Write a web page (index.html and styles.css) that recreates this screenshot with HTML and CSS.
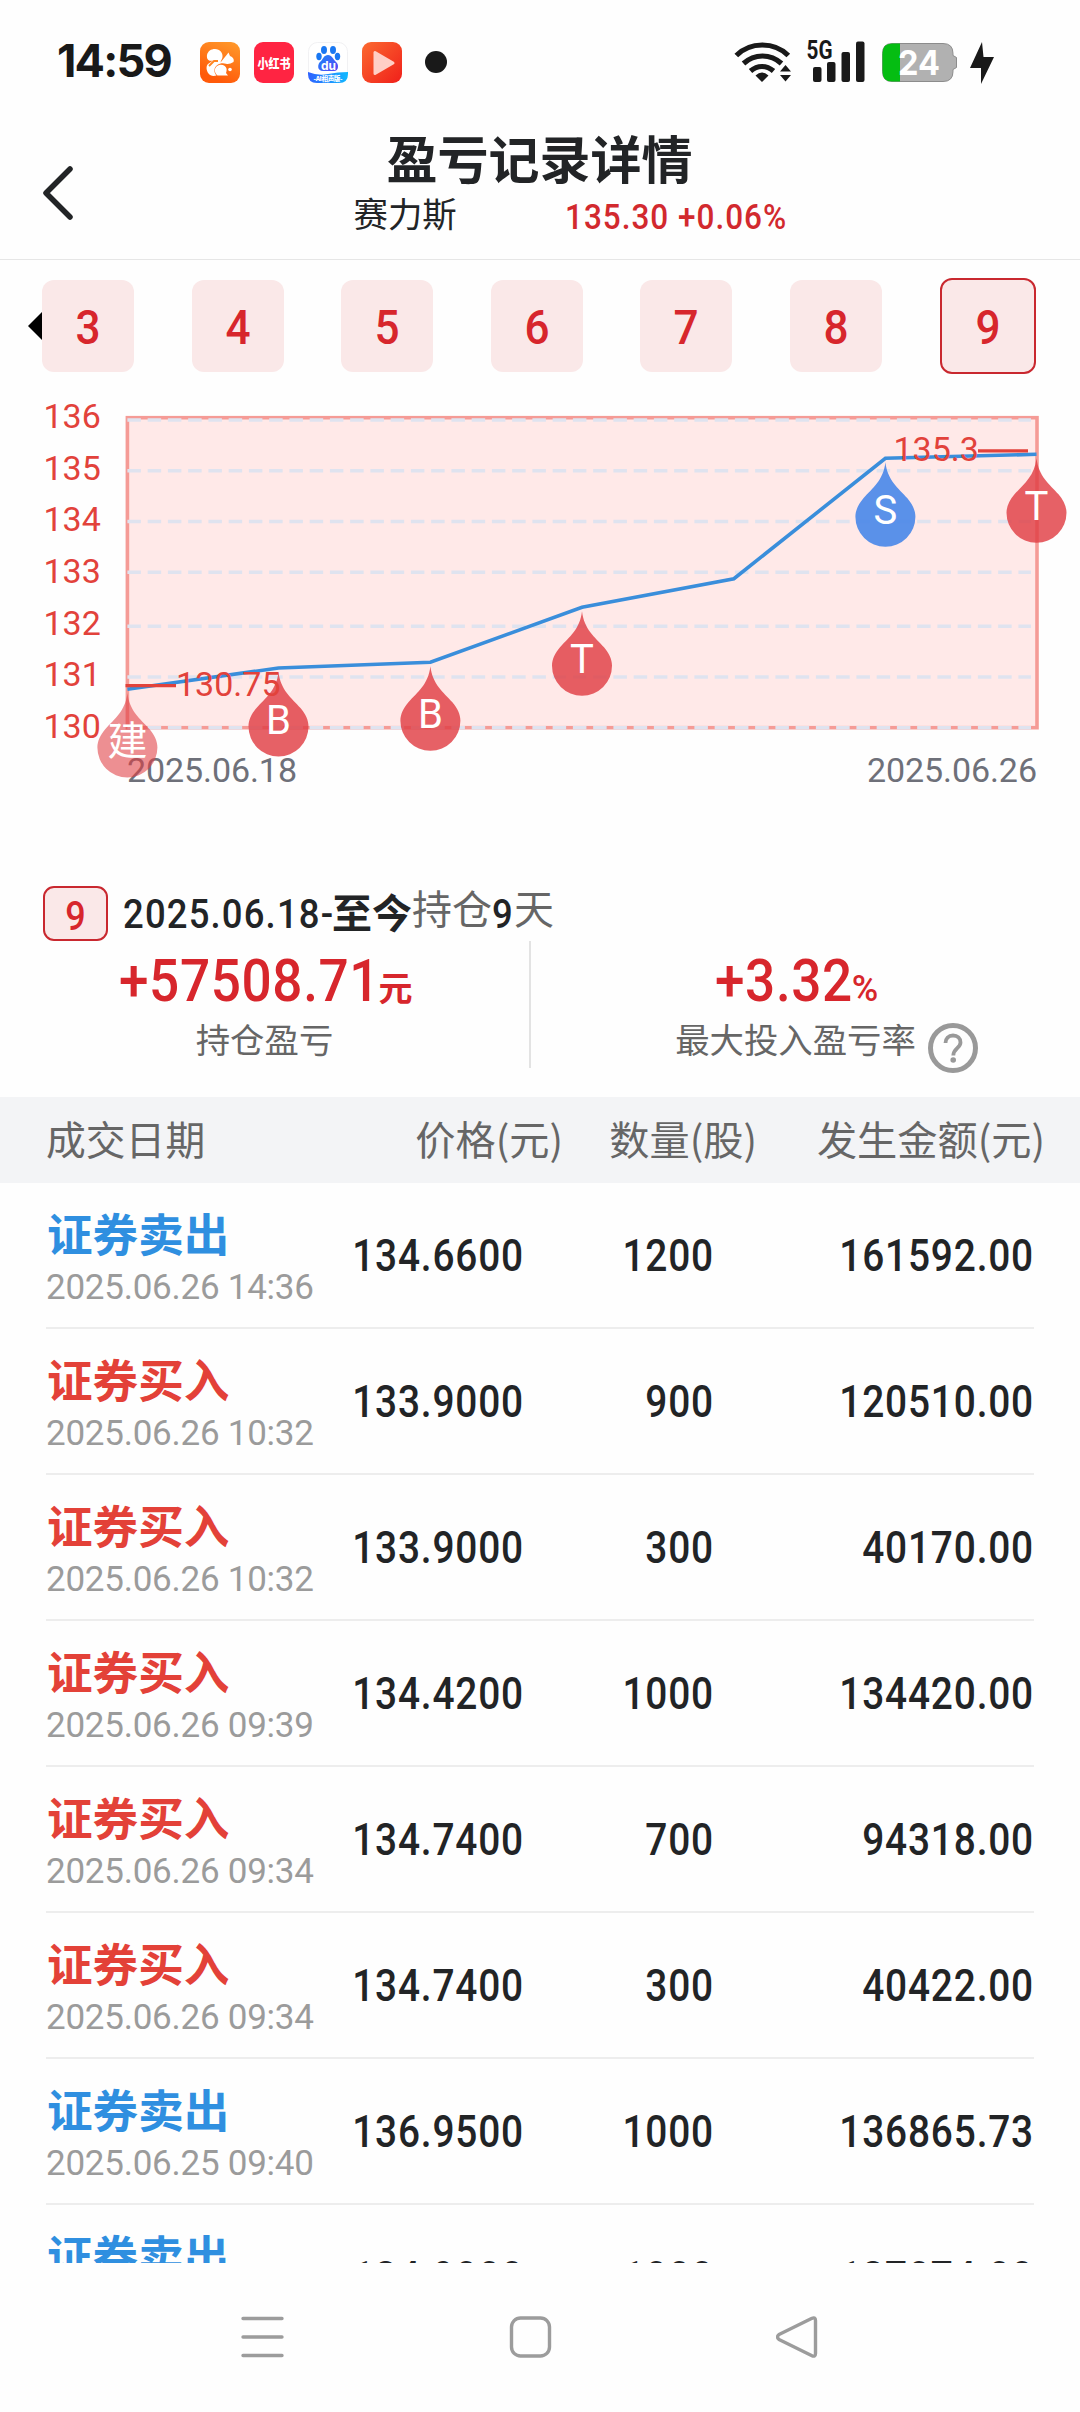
FILE: index.html
```html
<!DOCTYPE html>
<html lang="zh-CN">
<head>
<meta charset="utf-8">
<title>盈亏记录详情</title>
<link rel="stylesheet" href="styles.css">
</head>
<body>
<div class="screen">
  <div class="status">
    <span class="clock">14:59</span>
    <div class="apps">
      <svg class="app" viewBox="0 0 40 41">
        <defs><linearGradient id="uc" x1="1" y1="0" x2=".6" y2="1"><stop offset="0" stop-color="#ff9b2b"/><stop offset="1" stop-color="#ff5a0a"/></linearGradient></defs>
        <rect width="40" height="41" rx="9" fill="url(#uc)"/>
        <path fill="#fff" d="M8.500 31.500C6 28 6 24 8 22l5-3.500C8 20 6.500 16.500 7 13c1-4 4-6 8-6 5 0 8 4 7.500 8-.3 2-1.500 3.500-2 5.500l6.500-8 1.500-2 1.500 3.500c3 1 4.500 3.500 3.500 6l-3 1.500c-2 .5-3 .5-4.500.2-5-1.700-11 1-11.500 6-.2 2.500.5 4 2 5.800-3 .8-6.500.5-8-2z"/>
        <path fill="#fff" d="M17.500 33.500c-3-2.500-3.500-6.500-1-9 3-3 9-2 10 2 .3 1.500 0 3-.5 4.500l2 2.500z"/>
        <circle cx="30" cy="27.500" r="1.800" fill="#fff"/>
        <path d="M9 24l5-5 4 0" stroke="#ff8420" stroke-width="1.800" fill="none"/>
      </svg>
      <svg class="app" viewBox="0 0 40 41">
        <rect width="40" height="41" rx="9" fill="#ff2442"/>
        <text class="tiny red-book" x="20" y="25.500" text-anchor="middle" textLength="33" lengthAdjust="spacingAndGlyphs">小红书</text>
      </svg>
      <svg class="app" viewBox="0 0 40 41">
        <defs>
          <linearGradient id="bd" x1="0" x2="1"><stop offset="0" stop-color="#2f62ff"/><stop offset="1" stop-color="#10b9ff"/></linearGradient>
          <linearGradient id="paw" x1="0" x2="1" y2="1"><stop offset="0" stop-color="#1788fa"/><stop offset="1" stop-color="#5b45f5"/></linearGradient>
        </defs>
        <rect x=".5" y=".5" width="39" height="40" rx="9" fill="#fff" stroke="#f1f1f3"/>
        <path d="M0 30q10 4 20 2t20-2v2q0 9-9 9H9q-9 0-9-9z" fill="url(#bd)"/>
        <g fill="#1877f2"><ellipse cx="16" cy="8" rx="3" ry="4"/><ellipse cx="25" cy="8" rx="3" ry="4"/><ellipse cx="11" cy="14.500" rx="2.700" ry="3.700"/><ellipse cx="29.500" cy="14.500" rx="2.700" ry="3.700"/></g>
        <path d="M20 13c4 0 5 4 8 7 3 2 3 9-2 9H15c-6 0-6-7-2-10 2-2 3-6 7-6z" fill="url(#paw)"/>
        <text class="tiny du" x="20.500" y="27.500" text-anchor="middle">du</text>
        <text class="tiny ai" x="20" y="39" text-anchor="middle" textLength="29">-AI相声版-</text>
      </svg>
      <svg class="app" viewBox="0 0 40 41">
        <defs><linearGradient id="pl" x1="0" y1="0" x2="1" y2="1"><stop offset="0" stop-color="#fb6a30"/><stop offset="1" stop-color="#f01f1a"/></linearGradient></defs>
        <rect width="40" height="41" rx="9" fill="url(#pl)"/>
        <path d="M13 10.500v21l18-10.500z" fill="#ffcfc6" stroke="#ffcfc6" stroke-width="3" stroke-linejoin="round"/>
      </svg>
    </div>
    <span class="more-dot"></span>
    <svg class="signals" viewBox="730 36 270 54">
      <g fill="none" stroke="#191919" stroke-width="5.200">
        <path d="M736.300 55.500c14-14 38-14 52 0M743.500 63.500c11-10 27-10 38 0M750.500 71c7-6 16-6 23 0"/>
      </g>
      <path d="M755.500 75.500q6.500-6 13 0l-6.500 6.500zM780 71.500l5.500-6.500 5.500 6.500zM780 75h11l-5.500 6.500z" fill="#191919"/>
      <text class="net" x="806.500" y="59" textLength="26" lengthAdjust="spacingAndGlyphs">5G</text>
      <g fill="#191919"><rect x="813" y="67" width="8.500" height="15" rx="2"/><rect x="827" y="62" width="8.500" height="20" rx="2"/><rect x="841.500" y="52" width="8.500" height="30" rx="2"/><rect x="856" y="41.500" width="8.500" height="40.500" rx="2"/></g>
      <path d="M892 43.500h51q10 0 10 10v2l3.500 2v10l-3.500 2v2q0 10-10 10h-51q-9.500 0-9.500-10v-18q0-10 9.500-10z" fill="#b1b1b1" stroke="#8c8c8c"/>
      <path d="M892 43.500h8v38h-8q-9.500 0-9.500-10v-18q0-10 9.500-10z" fill="#05bd12"/>
      <text class="level" x="898" y="74.500" textLength="42" lengthAdjust="spacingAndGlyphs">24</text>
      <path d="M982 42l-12 26h11v16l13-27h-10.500z" fill="#191919"/>
    </svg>
  </div>

  <header class="header">
    <svg class="back" viewBox="0 0 32 56"><path d="M28 4L4 28l24 24" fill="none" stroke="#222426" stroke-width="5.500" stroke-linecap="round" stroke-linejoin="round"/></svg>
    <div class="heading">
      <h1 class="title">盈亏记录详情</h1>
      <div class="quote"><span class="stock">赛力斯</span><span class="quote-price">135.30 +0.06%</span></div>
    </div>
  </header>

  <nav class="periods">
    <svg class="prev" viewBox="0 0 14 28"><path d="M0 14L14 0v28z"/></svg>
    <span class="chip"><span class="digit">3</span></span><span class="chip"><span class="digit">4</span></span><span class="chip"><span class="digit">5</span></span><span class="chip"><span class="digit">6</span></span><span class="chip"><span class="digit">7</span></span><span class="chip"><span class="digit">8</span></span><span class="chip chip-on"><span class="digit">9</span></span>
  </nav>

  <svg class="chart" viewBox="0 380 1080 440">
    <defs><path id="pin" d="M0 4C2 22 13 30 22 40C27 46 30 52 30 58.500A30 30 0 0 1 -30 58.500C-30 52 -27 46 -22 40C-13 30 -2 22 0 4z"/></defs>
    <rect x="127.400" y="417.700" width="909.600" height="310" fill="#ffe9e8" stroke="#f59b96" stroke-width="3.600"/>
    <g class="grid">
      <path d="M127.400 420H1031M127.400 470.700H1031M127.400 521.500H1031M127.400 572.200H1031M127.400 626.300H1031M127.400 677H1031M127.400 727.700H1031"/>
    </g>
    <g class="axis">
      <text x="43.500" y="428">136</text><text x="43.500" y="479.500">135</text><text x="43.500" y="531">134</text><text x="43.500" y="582.500">133</text><text x="43.500" y="635">132</text><text x="43.500" y="686">131</text><text x="43.500" y="738">130</text>
    </g>
    <text class="date" x="127" y="781.700" textLength="170">2025.06.18</text>
    <text class="date" x="867" y="781.700" textLength="170">2025.06.26</text>
    <polyline points="127.400,689.300 278.500,668 430.400,662.300 582,607.300 733.900,578.700 885.400,458.300 1036.500,454.300" fill="none" stroke="#3a8edb" stroke-width="3.600"/>
    <g class="pin-red">
      <use class="pin-soft" href="#pin" x="127.400" y="689"/><use href="#pin" x="278.500" y="668"/><use href="#pin" x="430.400" y="662.300"/><use href="#pin" x="582" y="607.300"/><use href="#pin" x="1036.500" y="454.300"/>
    </g>
    <use class="pin-blue" href="#pin" x="885.400" y="458.300"/>
    <g class="pin-label">
      <text x="127.400" y="755">建</text><text x="278.500" y="733.500">B</text><text x="430.400" y="728">B</text><text x="582" y="672.500">T</text><text x="885.400" y="523.500">S</text><text x="1036.500" y="519.500">T</text>
    </g>
    <path d="M125.500 685.700H176M978 450.800H1028" stroke="#e2423b" stroke-width="3.200"/>
    <g class="axis"><text x="176" y="695.700">130.75</text><text x="893.500" y="461">135.3</text></g>
  </svg>

  <section class="range">
    <span class="badge"><span class="digit">9</span></span>
    <p class="range-text"><span class="num">2025.06.18-</span><b class="now">至今</b><span class="muted">持仓</span><span class="num days">9</span><span class="muted">天</span></p>
  </section>

  <section class="totals">
    <div class="total">
      <p class="amount"><span class="profit">+57508.71</span><small class="yuan">元</small></p>
      <p class="label">持仓盈亏</p>
    </div>
    <i class="divider"></i>
    <div class="total">
      <p class="amount"><span class="profit rate">+3.32</span><small class="percent">%</small></p>
      <p class="label">最大投入盈亏率<svg class="help" viewBox="0 0 50 50"><circle cx="25" cy="25" r="22.500" fill="none" stroke="#999" stroke-width="5"/><path d="M17.500 20c0-4.500 3-7.500 7.500-7.500s7.500 3 7.500 7c0 5.500-7.200 6-7.200 13" fill="none" stroke="#999" stroke-width="3.800"/><circle cx="25.200" cy="37" r="2.800" fill="#999"/></svg></p>
    </div>
  </section>

  <div class="thead"><span>成交日期</span><span>价格(元)</span><span>数量(股)</span><span>发生金额(元)</span></div>

  <main class="rows">
    <div class="row"><div><div class="kind sell">证券卖出</div><div class="time">2025.06.26 14:36</div></div><span>134.6600</span><span>1200</span><span>161592.00</span></div>
    <div class="row"><div><div class="kind buy">证券买入</div><div class="time">2025.06.26 10:32</div></div><span>133.9000</span><span>900</span><span>120510.00</span></div>
    <div class="row"><div><div class="kind buy">证券买入</div><div class="time">2025.06.26 10:32</div></div><span>133.9000</span><span>300</span><span>40170.00</span></div>
    <div class="row"><div><div class="kind buy">证券买入</div><div class="time">2025.06.26 09:39</div></div><span>134.4200</span><span>1000</span><span>134420.00</span></div>
    <div class="row"><div><div class="kind buy">证券买入</div><div class="time">2025.06.26 09:34</div></div><span>134.7400</span><span>700</span><span>94318.00</span></div>
    <div class="row"><div><div class="kind buy">证券买入</div><div class="time">2025.06.26 09:34</div></div><span>134.7400</span><span>300</span><span>40422.00</span></div>
    <div class="row"><div><div class="kind sell">证券卖出</div><div class="time">2025.06.25 09:40</div></div><span>136.9500</span><span>1000</span><span>136865.73</span></div>
    <div class="row"><div><div class="kind sell">证券卖出</div></div><span>134.9000</span><span>1000</span><span>137074.00</span></div>
  </main>

  <footer class="sysnav">
    <svg viewBox="0 0 46 46"><path d="M3 4.500h39M3 23h39M3 41.500h39"/></svg>
    <svg viewBox="0 0 46 46"><rect x="3.500" y="4" width="38" height="38" rx="9"/></svg>
    <svg viewBox="0 0 46 46"><path d="M3 20.500L35.500 4.500q4-2 4 2v33q0 4-4 2L3 25.500q-3-2.500 0-5z"/></svg>
  </footer>
</div>
</body>
</html>
```
FILE: styles.css
```css
* { box-sizing: border-box; }
body { margin: 0; background: #fefefe; }
h1, p { margin: 0; font-weight: 400; }
svg { display: block; }

.screen {
  width: 1080px;
  height: 2412px;
  overflow: hidden;
  display: flex;
  flex-direction: column;
  background: #fefefe;
  color: #222426;
  font-family: Roboto, "Noto Sans CJK SC", sans-serif;
}

/* status bar */
.status { height: 122px; padding: 0 80px 0 57px; display: flex; align-items: center; }
.clock { width: 143px; font: 700 45px/60px Inter, sans-serif; letter-spacing: -1.8px; color: #191919; }
.apps { display: flex; gap: 14px; margin-top: 2px; }
.app { width: 40px; height: 41px; }
.more-dot { width: 22px; height: 22px; margin: 2px 0 0 23px; border-radius: 50%; background: #191919; }
.signals { width: 270px; height: 54px; margin: 4px 0 0 auto; }
.tiny { font-family: "Noto Sans CJK SC", sans-serif; font-weight: 900; fill: #fff; }
.red-book { font-size: 13px; }
.du { font: 700 12px Inter, sans-serif; }
.ai { font-size: 6.5px; }
.net { font: 700 25px Roboto, sans-serif; fill: #191919; }
.level { font: 700 34px Inter, sans-serif; fill: #fff; }

/* title bar */
.header { height: 138px; display: flex; align-items: center; border-bottom: 1px solid #e6e6e6; }
.back { width: 32px; height: 56px; margin: 4px 0 0 42px; }
.heading { flex: 1; height: 100%; margin-right: 75px; display: flex; flex-direction: column; align-items: center; }
.title { margin-top: 5px; font: 700 51px/60px "Noto Sans CJK SC", sans-serif; }
.quote { width: 432px; display: flex; margin-left: 60px; line-height: 50px; }
.stock { flex: none; width: 211px; font: 400 34.4px/50px "Noto Sans CJK SC", sans-serif; }
.quote-price { flex: none; margin-top: 6px; font-size: 35px; font-weight: 500; letter-spacing: 1.1px; white-space: nowrap; transform: scaleX(.9); transform-origin: left; color: #d2292e; }

/* holding period chips */
.periods { height: 120px; padding: 12px 0 0 28px; display: flex; align-items: center; gap: 57.6px; }
.prev { width: 14px; height: 28px; margin-right: -57.6px; }
.chip { flex: none; width: 92px; height: 92px; border-radius: 12px; background: #fae8e8; color: #d7262c; font-size: 49px; font-weight: 500; line-height: 96px; text-align: center; }
.chip-on { width: 96px; height: 96px; border: 2px solid #c9282f; }
.digit { display: inline-block; transform: scaleX(.9); }

/* price chart */
.chart { width: 1080px; height: 440px; flex: none; font-family: Roboto, "Noto Sans CJK SC", sans-serif; font-size: 34px; }
.grid { fill: none; stroke: #dfe3ef; stroke-width: 3.5; stroke-dasharray: 13.5 6.75; }
.axis { fill: #e2423b; }
.date { fill: #6e7079; }
.pin-red { fill: rgba(224, 62, 68, .82); }
.pin-soft { fill: rgba(224, 62, 68, .58); }
.pin-blue { fill: rgba(76, 137, 232, .92); }
.pin-label { fill: #fff; font-size: 40px; text-anchor: middle; }

/* period summary */
.range { margin-top: 66px; height: 55px; padding-left: 43px; display: flex; align-items: center; gap: 15px; }
.badge { width: 65px; height: 55px; border: 2px solid #c9282f; border-radius: 11px; background: #fae8e8; color: #d7262c; font-size: 40px; font-weight: 500; line-height: 57px; text-align: center; }
.range-text { margin-top: 2px; display: flex; align-items: baseline; font-size: 40.5px; line-height: 55px; }
.num { width: 209px; font-weight: 500; letter-spacing: 1.3px; white-space: nowrap; transform: scaleX(.9); transform-origin: left; }
.days { width: 22px; }
.now { font-size: 40px; }
.muted { color: #666; font-size: 40px; transform: translateY(-4px); }

.totals { height: 156px; display: flex; }
.total { width: 529px; }
.divider { width: 2px; height: 127px; background: #e3e3e3; }
.amount { margin-top: 5px; height: 70px; padding-left: 2px; display: flex; justify-content: center; align-items: baseline; color: #d7262c; font-size: 59px; font-weight: 500; line-height: 70px; }
.profit { width: 260px; letter-spacing: .7px; white-space: nowrap; transform: scaleX(.9); transform-origin: left; }
.rate { width: 137px; }
.yuan { font-size: 34px; font-weight: 700; }
.percent { font-size: 36px; }
.label { margin-top: -3px; display: flex; justify-content: center; font: 400 34.4px/50px "Noto Sans CJK SC", sans-serif; color: #666; }
.help { width: 50px; height: 50px; margin: 10px -62px 0 12px; }

/* trade list */
.thead { height: 86px; padding-left: 46px; display: grid; grid-template-columns: 280px 237px 194px 288px; background: #f3f4f6; color: #666; font: 400 40.2px/82px "Noto Sans CJK SC", sans-serif; text-align: right; }
.thead span:first-child { font-size: 39.8px; text-align: left; }
.rows { height: 1080px; flex: none; overflow: hidden; padding: 0 46px; }
.row { height: 146px; border-bottom: 2px solid #ededed; display: grid; grid-template-columns: 280px 198px 190px 320px; font-size: 43.5px; font-weight: 500; line-height: 148px; text-align: right; }
.row > span { letter-spacing: .9px; transform: scaleX(.893); transform-origin: right; }
.row > div { padding: 21px 0 0 1px; text-align: left; }
.kind { font: 700 45.6px/56px "Noto Sans CJK SC", sans-serif; }
.sell { color: #2f8fe0; }
.buy { color: #e34138; }
.time { margin: 3px 0 0 -1px; color: #9b9b9b; font-size: 35px; font-weight: 400; line-height: 50px; letter-spacing: -.25px; white-space: nowrap; }

/* system navigation */
.sysnav { height: 149px; padding: 0 0 2px 240px; display: flex; align-items: center; gap: 222px; }
.sysnav svg { width: 46px; height: 46px; fill: none; stroke: #9c9c9c; stroke-width: 3.4; stroke-linecap: round; stroke-linejoin: round; }
```
